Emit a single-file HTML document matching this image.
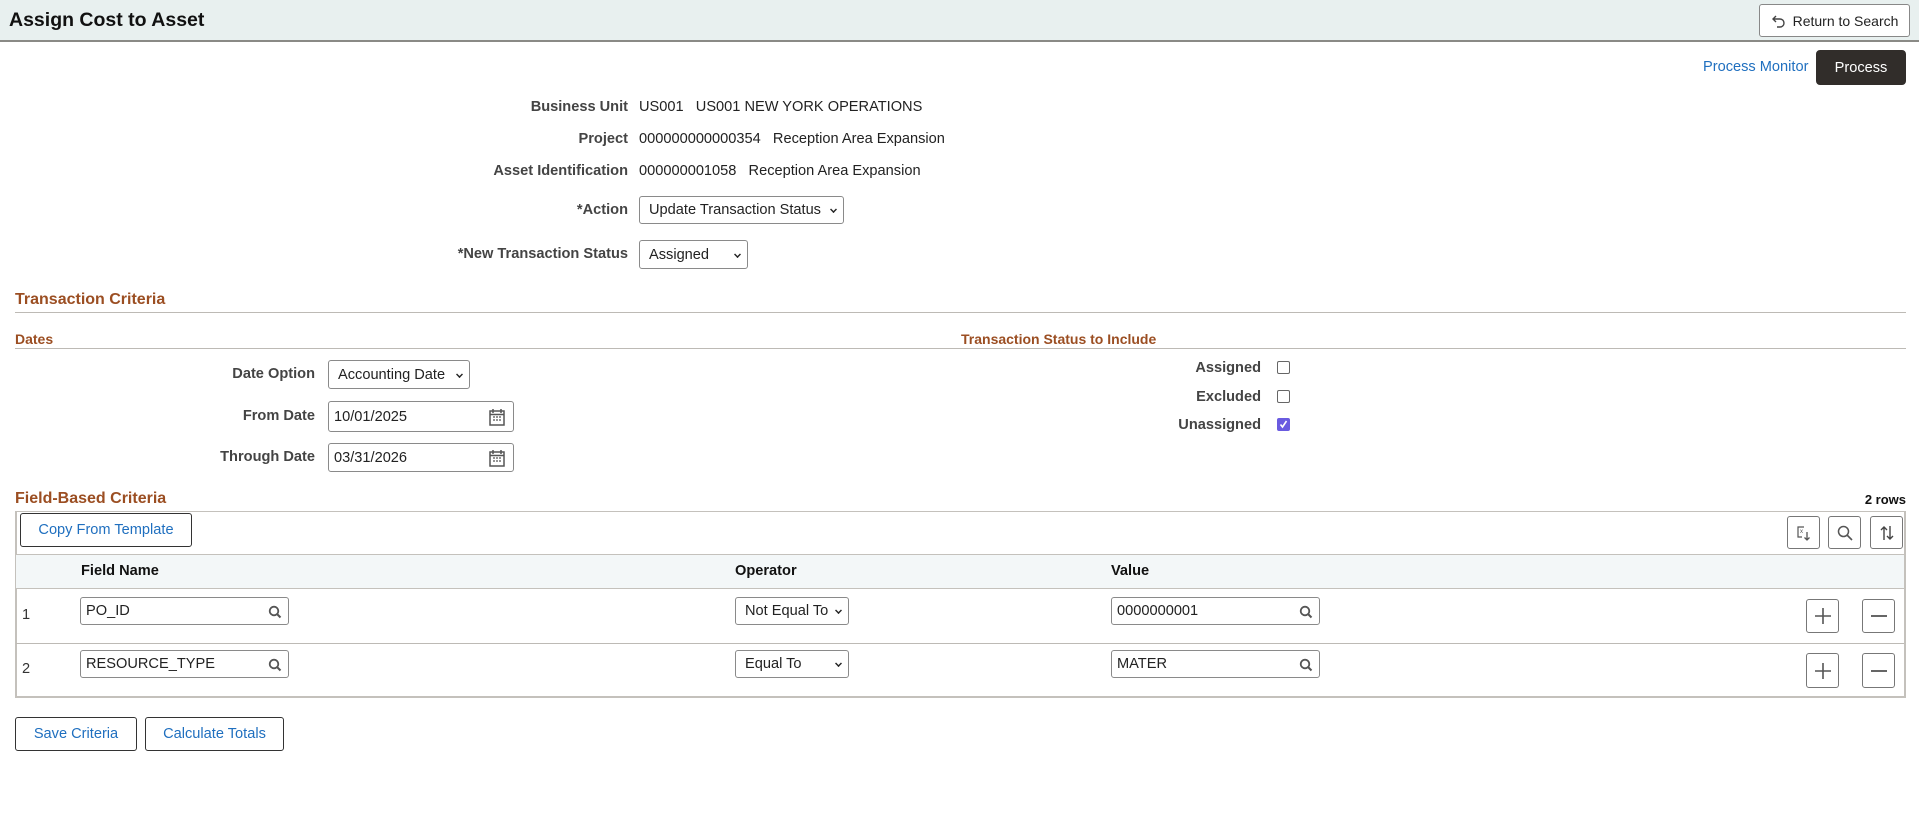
<!DOCTYPE html>
<html><head><meta charset="utf-8"><style>
*{box-sizing:border-box;margin:0;padding:0}
body{width:1919px;height:825px;position:relative;background:#fff;font-family:"Liberation Sans",Arial,sans-serif;font-size:14.6px;color:#333;overflow:hidden}
.a{position:absolute}
.hdr{left:0;top:0;width:1919px;height:42px;background:#e8f0ef;border-bottom:2px solid #8a8a86}
.lbl{position:absolute;text-align:right;font-weight:bold;color:#444;white-space:nowrap}
.val{position:absolute;white-space:nowrap;color:#222}
.box{position:absolute;border:1px solid #8a8a8a;border-radius:3px;background:#fff;display:flex;align-items:center;padding-left:5px;color:#222;white-space:nowrap}
.sel{padding-left:9px}
.chev{position:absolute;right:6px;top:50%;margin-top:-4px;width:7px;height:7px;border-right:2px solid #222;border-bottom:2px solid #222;transform:rotate(45deg) scale(.7)}
.sec{position:absolute;color:#9b4e22;font-weight:bold;white-space:nowrap}
.line{position:absolute;height:1px;background:#bdbab5}
.btn{position:absolute;border:1px solid #333;border-radius:3px;background:#fff;color:#1f6fbf;display:flex;align-items:center;justify-content:center;white-space:nowrap;font-size:14.6px}
.ib{position:absolute;border:1px solid #777;border-radius:3px;background:#fff;display:flex;align-items:center;justify-content:center}
.cb{position:absolute;width:13px;height:13px;border:1px solid #666;border-radius:2px;background:#fff}
.th{position:absolute;font-weight:bold;color:#111;font-size:14.6px}
</style></head><body>
<div class="a hdr"></div>
<div class="a" style="left:9px;top:9px;font-size:19.5px;font-weight:bold;color:#111">Assign Cost to Asset</div>
<div class="btn" style="left:1759px;top:4px;width:151px;height:33px;border-color:#888;color:#222;font-size:14px">
<svg width="16" height="16" viewBox="0 0 16 16" style="margin-right:6px"><path d="M5 3 L2 6 L5 9 M2 6 H9 a4 4 0 0 1 0 8 H6" fill="none" stroke="#444" stroke-width="1.4"/></svg>Return to Search</div>
<div class="a" style="left:1703px;top:59px;color:#1f6fbf">Process Monitor</div>
<div class="btn" style="left:1816px;top:50px;width:90px;height:35px;background:#312d2a;border-color:#312d2a;color:#fff;border-radius:4px">Process</div>

<div class="lbl" style="right:1291px;top:99px">Business Unit</div>
<div class="val" style="left:639px;top:99px">US001&nbsp;&nbsp;&nbsp;US001 NEW YORK OPERATIONS</div>
<div class="lbl" style="right:1291px;top:131px">Project</div>
<div class="val" style="left:639px;top:131px">000000000000354&nbsp;&nbsp;&nbsp;Reception Area Expansion</div>
<div class="lbl" style="right:1291px;top:163px">Asset Identification</div>
<div class="val" style="left:639px;top:163px">000000001058&nbsp;&nbsp;&nbsp;Reception Area Expansion</div>
<div class="lbl" style="right:1291px;top:202px;font-weight:bold">*Action</div>
<div class="box sel" style="left:639px;top:196px;width:205px;height:28px">Update Transaction Status<span class="chev"></span></div>
<div class="lbl" style="right:1291px;top:246px">*New Transaction Status</div>
<div class="box sel" style="left:639px;top:240px;width:109px;height:29px">Assigned<span class="chev"></span></div>

<div class="sec" style="left:15px;top:291px;font-size:16px">Transaction Criteria</div>
<div class="line" style="left:15px;top:312px;width:1891px"></div>
<div class="sec" style="left:15px;top:331px;font-size:14px">Dates</div>
<div class="sec" style="left:961px;top:331px;font-size:14px">Transaction Status to Include</div>
<div class="line" style="left:15px;top:348px;width:1891px"></div>

<div class="lbl" style="right:1604px;top:366px">Date Option</div>
<div class="box sel" style="left:328px;top:360px;width:142px;height:29px">Accounting Date<span class="chev"></span></div>
<div class="lbl" style="right:1604px;top:408px">From Date</div>
<div class="box" style="left:328px;top:401px;width:186px;height:31px">10/01/2025
<svg class="a" style="right:8px;top:6px" width="16" height="18" viewBox="0 0 16 18"><rect x="1" y="3" width="14" height="14" fill="none" stroke="#555" stroke-width="1.5"/><path d="M4 1v4M12 1v4M1 6.5h14" stroke="#555" stroke-width="1.5"/><path d="M4 9h2M7 9h2M10 9h2M4 12h2M7 12h2M10 12h2" stroke="#555" stroke-width="1.3"/></svg></div>
<div class="lbl" style="right:1604px;top:449px">Through Date</div>
<div class="box" style="left:328px;top:443px;width:186px;height:29px">03/31/2026
<svg class="a" style="right:8px;top:5px" width="16" height="18" viewBox="0 0 16 18"><rect x="1" y="3" width="14" height="14" fill="none" stroke="#555" stroke-width="1.5"/><path d="M4 1v4M12 1v4M1 6.5h14" stroke="#555" stroke-width="1.5"/><path d="M4 9h2M7 9h2M10 9h2M4 12h2M7 12h2M10 12h2" stroke="#555" stroke-width="1.3"/></svg></div>

<div class="lbl" style="right:658px;top:360px">Assigned</div>
<div class="cb" style="left:1277px;top:361px"></div>
<div class="lbl" style="right:658px;top:389px">Excluded</div>
<div class="cb" style="left:1277px;top:390px"></div>
<div class="lbl" style="right:658px;top:417px">Unassigned</div>
<div class="cb" style="left:1277px;top:418px;background:#6a5be0;border-color:#6a5be0"><svg width="11" height="11" viewBox="0 0 11 11" style="position:absolute;left:0;top:0"><path d="M2.5 5.5l2 2.5 4-6" fill="none" stroke="#fff" stroke-width="1.6"/></svg></div>

<div class="sec" style="left:15px;top:490px;font-size:16px">Field-Based Criteria</div>
<div class="a" style="right:13px;top:492px;font-weight:bold;color:#111;font-size:13px">2 rows</div>
<div class="a" style="left:15px;top:511px;width:1891px;height:187px;border:2px solid #c4c1bc;border-top-width:1px"></div>
<div class="btn" style="left:20px;top:513px;width:172px;height:34px">Copy From Template</div>
<div class="ib" style="left:1787px;top:516px;width:33px;height:33px"><svg width="18" height="18" viewBox="0 0 18 18"><path d="M9 3H3v10h4" fill="none" stroke="#555" stroke-width="1.2"/><text x="5" y="9" font-size="6" fill="#555" font-family="Liberation Sans">x</text><path d="M12 8v8M9.5 13.5L12 16l2.5-2.5" fill="none" stroke="#555" stroke-width="1.3"/></svg></div>
<div class="ib" style="left:1828px;top:516px;width:33px;height:33px"><svg width="18" height="18" viewBox="0 0 18 18"><circle cx="7.5" cy="7.5" r="5" fill="none" stroke="#555" stroke-width="1.5"/><path d="M11 11l5 5" stroke="#555" stroke-width="1.6"/></svg></div>
<div class="ib" style="left:1870px;top:516px;width:33px;height:33px"><svg width="18" height="18" viewBox="0 0 18 18"><path d="M6 16V3M3 6l3-3 3 3M12 2v13M9 12l3 3 3-3" fill="none" stroke="#444" stroke-width="1.4"/></svg></div>
<div class="a" style="left:16px;top:554px;width:1888px;height:35px;background:#f3f7f8;border-top:1px solid #c4c1bc;border-bottom:1px solid #c4c1bc"></div>
<div class="th" style="left:81px;top:563px">Field Name</div>
<div class="th" style="left:735px;top:563px">Operator</div>
<div class="th" style="left:1111px;top:563px">Value</div>

<div class="a" style="left:22px;top:607px">1</div>
<div class="box" style="left:80px;top:597px;width:209px;height:28px">PO_ID<svg class="a" style="right:6px;top:7px" width="14" height="14" viewBox="0 0 14 14"><circle cx="6" cy="6" r="4.3" fill="none" stroke="#555" stroke-width="1.8"/><path d="M9 9l3.5 3.5" stroke="#555" stroke-width="2"/></svg></div>
<div class="box sel" style="left:735px;top:597px;width:114px;height:28px">Not Equal To<span class="chev"></span></div>
<div class="box" style="left:1111px;top:597px;width:209px;height:28px">0000000001<svg class="a" style="right:6px;top:7px" width="14" height="14" viewBox="0 0 14 14"><circle cx="6" cy="6" r="4.3" fill="none" stroke="#555" stroke-width="1.8"/><path d="M9 9l3.5 3.5" stroke="#555" stroke-width="2"/></svg></div>
<div class="ib" style="left:1806px;top:599px;width:33px;height:34px"><svg width="18" height="18"><path d="M9 1v16M1 9h16" stroke="#555" stroke-width="1.6"/></svg></div>
<div class="ib" style="left:1862px;top:599px;width:33px;height:34px"><svg width="18" height="18"><path d="M1 9h16" stroke="#555" stroke-width="1.8"/></svg></div>
<div class="line" style="left:16px;top:643px;width:1888px"></div>

<div class="a" style="left:22px;top:661px">2</div>
<div class="box" style="left:80px;top:650px;width:209px;height:28px">RESOURCE_TYPE<svg class="a" style="right:6px;top:7px" width="14" height="14" viewBox="0 0 14 14"><circle cx="6" cy="6" r="4.3" fill="none" stroke="#555" stroke-width="1.8"/><path d="M9 9l3.5 3.5" stroke="#555" stroke-width="2"/></svg></div>
<div class="box sel" style="left:735px;top:650px;width:114px;height:28px">Equal To<span class="chev"></span></div>
<div class="box" style="left:1111px;top:650px;width:209px;height:28px">MATER<svg class="a" style="right:6px;top:7px" width="14" height="14" viewBox="0 0 14 14"><circle cx="6" cy="6" r="4.3" fill="none" stroke="#555" stroke-width="1.8"/><path d="M9 9l3.5 3.5" stroke="#555" stroke-width="2"/></svg></div>
<div class="ib" style="left:1806px;top:653px;width:33px;height:35px"><svg width="18" height="18"><path d="M9 1v16M1 9h16" stroke="#555" stroke-width="1.6"/></svg></div>
<div class="ib" style="left:1862px;top:653px;width:33px;height:35px"><svg width="18" height="18"><path d="M1 9h16" stroke="#555" stroke-width="1.8"/></svg></div>

<div class="btn" style="left:15px;top:717px;width:122px;height:34px">Save Criteria</div>
<div class="btn" style="left:145px;top:717px;width:139px;height:34px">Calculate Totals</div>
</body></html>
